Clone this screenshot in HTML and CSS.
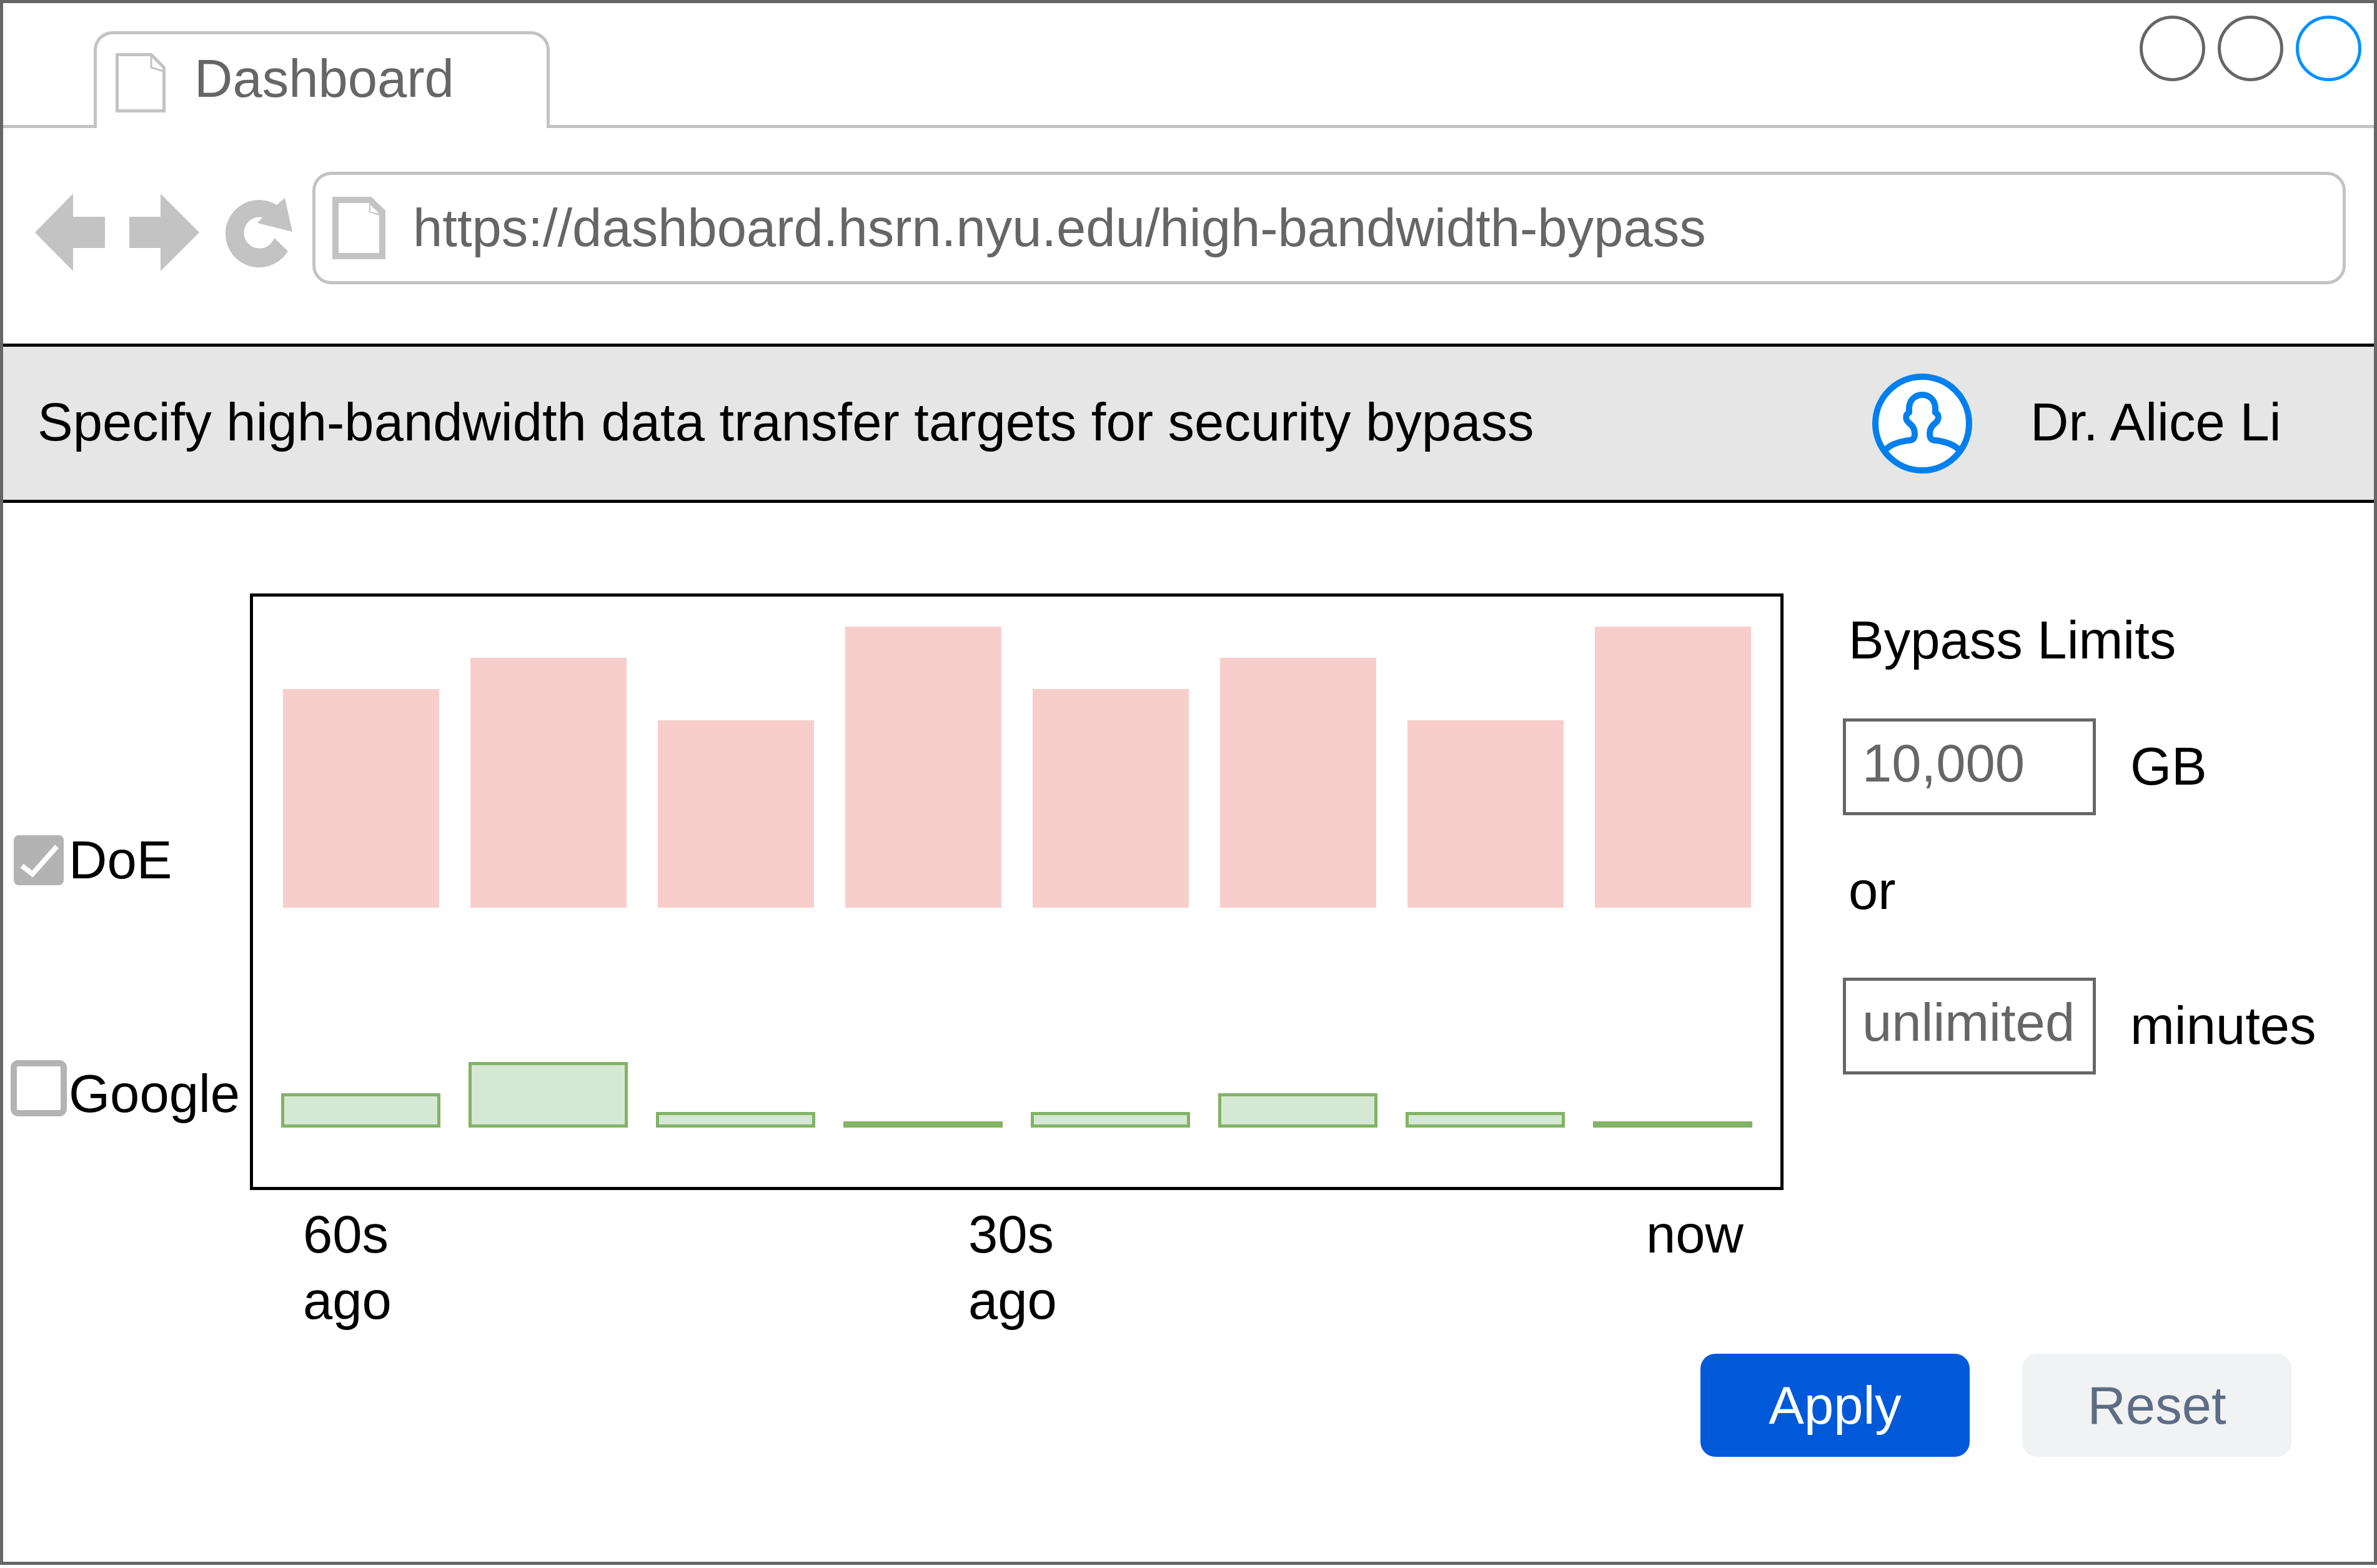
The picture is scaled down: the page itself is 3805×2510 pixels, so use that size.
FILE: index.html
```html
<!DOCTYPE html>
<html lang="en">
<head>
    <meta charset="UTF-8">
    <meta name="viewport" content="width=device-width, initial-scale=1.0">
    <title>Dashboard</title>
    <link rel="stylesheet" href="styles.css">
</head>
<body>
    <div class="window">
        <div class="tabbar">
            <div class="tab">
                <svg class="tab-icon" viewBox="0 0 80 95">
                    <path d="M2.5 2.5H57L77.5 23V92.5H2.5Z" fill="#fff" stroke="#c3c3c3" stroke-width="5"/>
                    <path d="M57 4V23L76 29" fill="none" stroke="#c3c3c3" stroke-width="3"/>
                </svg>
                <span>Dashboard</span>
            </div>
            <div class="controls">
                <div class="dot"></div>
                <div class="dot"></div>
                <div class="dot dot-active"></div>
            </div>
        </div>

        <div class="toolbar">
            <svg class="nav-arrow" viewBox="0 0 112 124"><path d="M0 62L61 0V37H112V87H61V124Z" fill="#c3c3c3"/></svg>
            <svg class="nav-arrow nav-forward" viewBox="0 0 112 124"><path d="M112 62L50 0V37H0V87H50V124Z" fill="#c3c3c3"/></svg>
            <svg class="nav-reload" viewBox="0 0 110 112">
                <path d="M83 11L96 0L108 54L52 40L60 31A25 25 0 1 0 79 64L101 85A54 54 0 1 1 83 11Z" fill="#c3c3c3"/>
            </svg>
            <div class="urlbar">
                <svg class="url-icon" viewBox="0 0 85 100">
                    <path d="M0 0H62L85 22V100H0Z" fill="#c3c3c3"/>
                    <path d="M10 10H59V25L75 30V90H10Z" fill="#fff"/>
                    <path d="M61 13L75 27L61 24Z" fill="#fff"/>
                </svg>
                <span>https://dashboard.hsrn.nyu.edu/high-bandwidth-bypass</span>
            </div>
        </div>

        <div class="header">
            <div class="header-title">Specify high-bandwidth data transfer targets for security bypass</div>
            <svg class="avatar" viewBox="0 0 160 160">
                <circle cx="80" cy="80" r="75" fill="#fff" stroke="#007fef" stroke-width="10"/>
                <path d="M21 122C30 113 42 109 58 107C66 107 68 103 68 96C68 90 65 84 60 80C55 76 53 72 55 66L59 62V56C59 43 68 34 80 34C92 34 101 43 101 56V62L105 66C107 72 105 76 100 80C95 84 92 90 92 96C92 103 94 107 102 107C118 109 130 113 139 122" fill="none" stroke="#007fef" stroke-width="10"/>
            </svg>
            <div class="header-user">Dr. Alice Li</div>
        </div>

        <div class="main">
            <div class="legend">
                <div class="legend-row legend-doe">
                    <svg class="check check-on" viewBox="0 0 80 80">
                        <rect width="80" height="80" rx="8" fill="#b3b3b3"/>
                        <path d="M13 49L30 62L69 18" fill="none" stroke="#fff" stroke-width="8"/>
                    </svg>
                    <span>DoE</span>
                </div>
                <div class="legend-row legend-google">
                    <div class="check-off"></div>
                    <span>Google</span>
                </div>
            </div>

            <div class="chart-col">
                <div class="chart">
                    <div class="series series-red">
                        <div class="bar-red" style="height: 350px"></div>
                        <div class="bar-red" style="height: 400px"></div>
                        <div class="bar-red" style="height: 300px"></div>
                        <div class="bar-red" style="height: 450px"></div>
                        <div class="bar-red" style="height: 350px"></div>
                        <div class="bar-red" style="height: 400px"></div>
                        <div class="bar-red" style="height: 300px"></div>
                        <div class="bar-red" style="height: 450px"></div>
                    </div>
                    <div class="series series-green">
                        <div class="bar-green" style="height: 55px"></div>
                        <div class="bar-green" style="height: 105px"></div>
                        <div class="bar-green" style="height: 25px"></div>
                        <div class="bar-green" style="height: 10px"></div>
                        <div class="bar-green" style="height: 25px"></div>
                        <div class="bar-green" style="height: 55px"></div>
                        <div class="bar-green" style="height: 25px"></div>
                        <div class="bar-green" style="height: 10px"></div>
                    </div>
                </div>
                <div class="axis">
                    <div class="tick tick-60">60s<br>ago</div>
                    <div class="tick tick-30">30s<br>ago</div>
                    <div class="tick">now</div>
                </div>
            </div>

            <div class="limits">
                <div class="limits-title">Bypass Limits</div>
                <div class="limit-row">
                    <div class="limit-box">10,000</div>
                    <span class="limit-unit">GB</span>
                </div>
                <div class="limits-or">or</div>
                <div class="limit-row limit-row-last">
                    <div class="limit-box">unlimited</div>
                    <span class="limit-unit">minutes</span>
                </div>
            </div>
        </div>

        <div class="actions">
            <button class="btn btn-primary">Apply</button>
            <button class="btn btn-secondary">Reset</button>
        </div>
    </div>
</body>
</html>
```

FILE: styles.css
```css
* {
    box-sizing: border-box;
}

body {
    margin: 0;
    font-family: "Liberation Sans", Arial, sans-serif;
    font-size: 85px;
    color: #000;
    background: #fff;
}

.window {
    width: 3805px;
    height: 2505px;
    border: 5px solid #666;
    overflow: hidden;
}

/* tab strip */
.tabbar {
    display: flex;
    align-items: flex-start;
    height: 200px;
    border-bottom: 5px solid #c3c3c3;
}

.tab {
    display: flex;
    align-items: flex-start;
    width: 730px;
    height: 155px;
    margin: 45px 0 -5px 145px;
    padding: 30px 0 0 30px;
    background: #fff;
    border: 5px solid #c3c3c3;
    border-bottom: none;
    border-radius: 30px 30px 0 0;
    color: #666;
}

.tab-icon {
    width: 80px;
    height: 95px;
    flex: none;
}

.tab span {
    margin: -9px 0 0 46px;
    line-height: 100px;
}

.controls {
    display: flex;
    gap: 20px;
    margin: 20px 20px 0 auto;
}

.dot {
    width: 105px;
    height: 105px;
    border: 5px solid #666;
    border-radius: 50%;
}

.dot-active {
    border-color: #0091ff;
}

/* address bar */
.toolbar {
    display: flex;
    align-items: flex-start;
    height: 345px;
    padding: 70px 45px 0 51px;
}

.nav-arrow {
    width: 112px;
    height: 124px;
    margin-top: 35px;
    flex: none;
}

.nav-forward {
    margin-left: 39px;
}

.nav-reload {
    width: 110px;
    height: 112px;
    margin: 42px 0 0 41px;
    flex: none;
}

.urlbar {
    display: flex;
    align-items: center;
    flex: 1;
    height: 180px;
    margin-left: 30px;
    padding: 0 0 0 27px;
    border: 5px solid #c3c3c3;
    border-radius: 30px;
    color: #666;
}

.url-icon {
    width: 85px;
    height: 100px;
    flex: none;
}

.urlbar span {
    margin-left: 44px;
}

/* page header */
.header {
    display: flex;
    align-items: center;
    height: 255px;
    padding-left: 55px;
    background: #e6e6e6;
    border-top: 5px solid #000;
    border-bottom: 5px solid #000;
}

.header-title {
    width: 2937px;
    padding-bottom: 3px;
}

.avatar {
    width: 160px;
    height: 160px;
    flex: none;
}

.header-user {
    margin-left: 93px;
    padding-bottom: 3px;
}

/* chart + limits */
.main {
    display: flex;
    align-items: flex-start;
    padding-top: 145px;
}

.legend {
    width: 395px;
    padding-top: 378px;
    flex: none;
}

.legend-row {
    display: flex;
    align-items: center;
}

.legend-doe {
    padding-left: 17px;
    gap: 8px;
}

.legend-google {
    margin-top: 258px;
    padding-left: 12px;
    gap: 3px;
}

.legend-google span {
    margin-top: 18px;
}

.check {
    width: 80px;
    height: 80px;
    flex: none;
}

.check-off {
    width: 90px;
    height: 90px;
    flex: none;
    border: 10px solid #b3b3b3;
    border-radius: 12px;
}

.chart-col {
    width: 2455px;
    flex: none;
}

.chart {
    height: 955px;
    padding: 47.5px 45px 0;
    border: 5px solid #000;
}

.series {
    display: flex;
    align-items: flex-end;
}

.series-red {
    height: 450px;
    gap: 50px;
    margin: 0 2.5px;
}

.series-green {
    height: 105px;
    gap: 45px;
    margin-top: 247.5px;
}

.bar-red {
    width: 250px;
    background: #f8cecc;
}

.bar-green {
    width: 255px;
    background: #d5e8d4;
    border: 5px solid #82b366;
}

.axis {
    display: flex;
    padding: 18px 0 0 85px;
    line-height: 106px;
}

.tick-60 {
    width: 1065px;
}

.tick-30 {
    width: 1085px;
}

.limits {
    margin-left: 95px;
    padding-top: 25px;
}

.limits-title {
    padding-left: 9px;
    line-height: 100px;
    white-space: nowrap;
}

.limit-row {
    display: flex;
    align-items: center;
    margin-top: 75px;
}

.limit-row-last {
    margin-top: 89px;
}

.limit-box {
    width: 405px;
    height: 155px;
    padding: 0 0 12px 26px;
    display: flex;
    align-items: center;
    border: 5px solid #666;
    color: #666;
    line-height: 100px;
}

.limit-unit {
    margin-left: 55px;
    padding-bottom: 2px;
}

.limits-or {
    margin-top: 71px;
    padding-left: 9px;
    line-height: 100px;
}

/* buttons */
.actions {
    display: flex;
    justify-content: flex-end;
    gap: 84px;
    margin-top: 32px;
    padding-right: 132px;
}

.btn {
    width: 431px;
    height: 165px;
    padding: 0;
    border: none;
    border-radius: 24px;
    font-family: inherit;
    font-size: 85px;
}

.btn-primary {
    background: #0059d9;
    color: #fff;
}

.btn-secondary {
    background: #f1f2f4;
    color: #5e6c84;
}
```
